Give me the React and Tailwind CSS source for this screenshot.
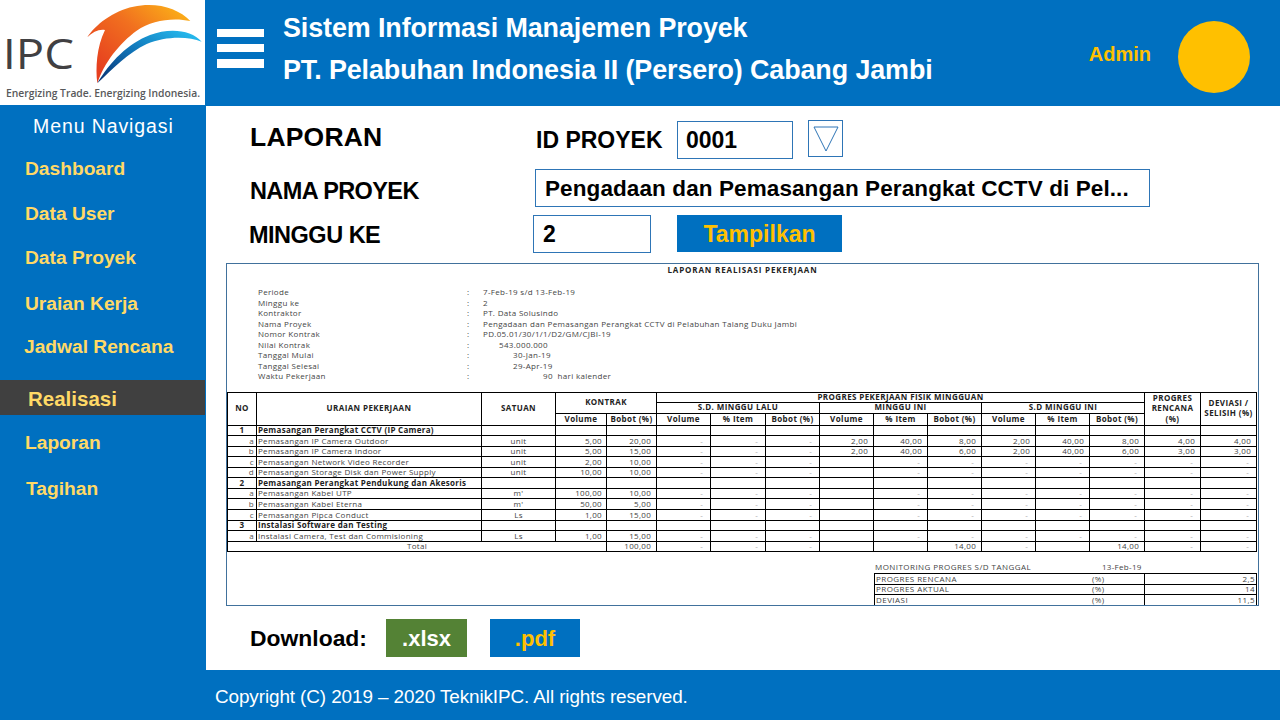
import React from "react";

const dash = "-";
const noWeek = [dash, dash, dash, "", dash, dash, dash, dash, dash, dash, dash];
const rowsData = [
  { h: "h-[10px]", no: "1", title: "Pemasangan Perangkat CCTV (IP Camera)", section: true },
  { h: "h-[11px]", no: "a", title: "Pemasangan IP Camera Outdoor", unit: "unit", vol: "5,00", bob: "20,00", cells: [dash, dash, dash, "2,00", "40,00", "8,00", "2,00", "40,00", "8,00", "4,00", "4,00"] },
  { h: "h-[10px]", no: "b", title: "Pemasangan IP Camera Indoor", unit: "unit", vol: "5,00", bob: "15,00", cells: [dash, dash, dash, "2,00", "40,00", "6,00", "2,00", "40,00", "6,00", "3,00", "3,00"] },
  { h: "h-[11px]", no: "c", title: "Pemasangan Network Video Recorder", unit: "unit", vol: "2,00", bob: "10,00", cells: noWeek },
  { h: "h-[10px]", no: "d", title: "Pemasangan Storage Disk dan Power Supply", unit: "unit", vol: "10,00", bob: "10,00", cells: noWeek },
  { h: "h-[11px]", no: "2", title: "Pemasangan Perangkat Pendukung dan Akesoris", section: true },
  { h: "h-[10px]", no: "a", title: "Pemasangan Kabel UTP", unit: "m'", vol: "100,00", bob: "10,00", cells: noWeek },
  { h: "h-[11px]", no: "b", title: "Pemasangan Kabel Eterna", unit: "m'", vol: "50,00", bob: "5,00", cells: noWeek },
  { h: "h-[11px]", no: "c", title: "Pemasangan Pipca Conduct", unit: "Ls", vol: "1,00", bob: "15,00", cells: noWeek },
  { h: "h-[10px]", no: "3", title: "Instalasi Software dan Testing", section: true },
  { h: "h-[11px]", no: "a", title: "Instalasi Camera, Test dan Commisioning", unit: "Ls", vol: "1,00", bob: "15,00", cells: noWeek },
];
const colWidths = [29, 225, 74, 51, 50, 54, 55, 54, 54, 54, 54, 54, 54, 55, 56, 56];
const info = [
  ["Periode", "7-Feb-19 s/d 13-Feb-19", "pl-0"],
  ["Minggu ke", "2", "pl-0"],
  ["Kontraktor", "PT. Data Solusindo", "pl-0"],
  ["Nama Proyek", "Pengadaan dan Pemasangan Perangkat CCTV di Pelabuhan Talang Duku Jambi", "pl-0"],
  ["Nomor Kontrak", "PD.05.01/30/1/1/D2/GM/CJBI-19", "pl-0"],
  ["Nilai Kontrak", "543.000.000", "pl-[16px]"],
  ["Tanggal Mulai", "30-Jan-19", "pl-[30px]"],
  ["Tanggal Selesai", "29-Apr-19", "pl-[30px]"],
  ["Waktu Pekerjaan", "90  hari kalender", "pl-[60px]"],
];
const menu = [
  ["Dashboard", "h-[44px] pl-[25px]"],
  ["Data User", "h-[45px] pl-[25px]"],
  ["Data Proyek", "h-[43px] pl-[25px]"],
  ["Uraian Kerja", "h-[49px] pl-[25px]"],
  ["Jadwal Rencana", "h-[37px] pl-[24px]"],
];
const b = "border border-black p-0 pb-[1px]";
const th = b + " text-center font-bold text-[#222] align-middle tracking-[0.4px]";

function Logo() {
  return (
    <svg viewBox="0 0 615 315" className="block w-[205px] h-[105px]">
      <defs>
        <linearGradient id="o" x1="0.1" y1="0.8" x2="1" y2="0">
          <stop offset="0" stopColor="#e63f1f" />
          <stop offset="0.5" stopColor="#f1701f" />
          <stop offset="1" stopColor="#fdbb17" />
        </linearGradient>
        <linearGradient id="c" x1="0" y1="1" x2="1" y2="0.1">
          <stop offset="0" stopColor="#0a2f6e" />
          <stop offset="0.5" stopColor="#0f74b8" />
          <stop offset="1" stopColor="#27bdf0" />
        </linearGradient>
      </defs>
      <path d="M262 112 C285 75 340 32 400 20 C470 5 535 25 571 63 C520 52 455 60 410 92 C360 128 310 190 292 250 C286 205 290 140 315 90 C298 86 278 96 262 112Z" fill="url(#o)" />
      <path d="M292 250 C330 185 385 130 450 105 C510 82 575 90 605 125 C565 108 495 108 440 132 C385 158 340 205 292 250Z" fill="url(#c)" />
      <text x="8" y="208" fontSize="126" fontWeight="500" fill="#414042" textLength="214" lengthAdjust="spacingAndGlyphs" style={{ fontFamily: '"Open Sans", sans-serif' }}>IPC</text>
      <text x="18" y="290" fontSize="34" fontWeight="600" fill="#58595b" textLength="582" lengthAdjust="spacingAndGlyphs" style={{ fontFamily: '"Open Sans", sans-serif' }}>Energizing Trade. Energizing Indonesia.</text>
    </svg>
  );
}

function Cell({ v }) {
  return (
    <td className={b + " text-right " + (v === dash ? "pr-[7px] text-[#aaa]" : "pr-[5px] text-[#444]")}>{v}</td>
  );
}

function ReportTable() {
  return (
    <table className="table-fixed border-collapse w-[1029px] text-[8px] leading-none tracking-[0.3px]">
      <colgroup>
        {colWidths.map((w, i) => <col key={i} style={{ width: w }} />)}
      </colgroup>
      <thead>
        <tr className="h-[10px]">
          <th rowSpan={3} className={th}>NO</th>
          <th rowSpan={3} className={th}>URAIAN PEKERJAAN</th>
          <th rowSpan={3} className={th}>SATUAN</th>
          <th rowSpan={2} colSpan={2} className={th}>KONTRAK</th>
          <th colSpan={9} className={th}>PROGRES PEKERJAAN FISIK MINGGUAN</th>
          <th rowSpan={3} className={th + " leading-[10.5px]"}>PROGRES<br />RENCANA<br />(%)</th>
          <th rowSpan={3} className={th + " leading-[10.5px]"}>DEVIASI /<br />SELISIH (%)</th>
        </tr>
        <tr className="h-[11px]">
          <th colSpan={3} className={th}>S.D. MINGGU LALU</th>
          <th colSpan={3} className={th}>MINGGU INI</th>
          <th colSpan={3} className={th}>S.D MINGGU INI</th>
        </tr>
        <tr className="h-[12px]">
          {["Volume", "Bobot (%)", "Volume", "% Item", "Bobot (%)", "Volume", "% Item", "Bobot (%)", "Volume", "% Item", "Bobot (%)"].map((t, i) => (
            <th key={i} className={th}>{t}</th>
          ))}
        </tr>
      </thead>
      <tbody>
        {rowsData.map((r, i) => (
          <tr key={i} className={r.h}>
            <td className={b + (r.section ? " text-center font-bold text-[#222]" : " text-right pr-[2px] text-[#555]")}>{r.no}</td>
            <td className={b + " pl-[1px] whitespace-nowrap " + (r.section ? "font-bold text-[#222]" : "text-[#444]")}>{r.title}</td>
            <td className={b + " text-center text-[#444]"}>{r.unit}</td>
            <td className={b + " text-right pr-[4px] text-[#444]"}>{r.vol}</td>
            <td className={b + " text-right pr-[5px] text-[#444]"}>{r.bob}</td>
            {(r.cells || Array(11).fill("")).map((v, j) => <Cell key={j} v={v} />)}
          </tr>
        ))}
        <tr className="h-[10px]">
          <td colSpan={4} className={b + " text-center text-[#444]"}>Total</td>
          <td className={b + " text-right pr-[5px] text-[#444]"}>100,00</td>
          {[dash, dash, dash, "", "", "14,00", dash, "", "14,00", dash, dash].map((v, j) => <Cell key={j} v={v} />)}
        </tr>
      </tbody>
    </table>
  );
}

function Monitoring() {
  const rows = [["PROGRES RENCANA", "2,5"], ["PROGRES AKTUAL", "14"], ["DEVIASI", "11,5"]];
  return (
    <div className="ml-[647px] mt-[10px] w-[383px] text-[8px] leading-none tracking-[0.45px] text-[#444]">
      <div className="flex h-[10px] items-center pl-[1px]">
        <span className="w-[227px]">MONITORING PROGRES S/D TANGGAL</span>
        <span className="tracking-[0.3px]">13-Feb-19</span>
      </div>
      <div className="grid grid-cols-[270px_1fr] border-t border-black mt-[1px]">
        {rows.map(([l, v], i) => (
          <div key={l} className={"col-span-2 grid grid-cols-[270px_1fr] h-[10.5px] border-x border-black " + (i < 2 ? "border-b" : "")}>
            <div className="flex items-center pl-[1px] border-r border-black">
              <span className="w-[216px]">{l}</span><span>(%)</span>
            </div>
            <div className="flex items-center justify-end pr-[1px]">{v}</div>
          </div>
        ))}
      </div>
    </div>
  );
}

export default function App() {
  return (
    <div className="w-[1280px] h-[720px] flex flex-col overflow-hidden bg-white font-['Liberation_Sans',sans-serif]">
      <header className="h-[106px] flex bg-[#0070c0] shrink-0">
        <div className="w-[205px] h-[105px] bg-white shrink-0"><Logo /></div>
        <div className="w-[47px] ml-[12px] mt-[29px] flex flex-col gap-[7px] shrink-0">
          <div className="h-[8px] bg-white" />
          <div className="h-[8px] bg-white" />
          <div className="h-[9px] bg-white" />
        </div>
        <div className="ml-[19px] mt-[7px] font-bold text-white text-[26.9px] leading-[42px] tracking-[-0.1px] whitespace-nowrap">
          <div>Sistem Informasi Manajemen Proyek</div>
          <div>PT. Pelabuhan Indonesia II (Persero) Cabang Jambi</div>
        </div>
        <div className="ml-auto mr-[30px] flex items-start">
          <span className="mt-[43px] text-[20px] leading-[22px] font-bold text-[#ffc000] mr-[27px]">Admin</span>
          <div className="mt-[21px] w-[72px] h-[72px] rounded-full bg-[#ffc000]" />
        </div>
      </header>
      <div className="flex flex-1 min-h-0">
        <nav className="w-[206px] bg-[#0070c0] shrink-0 text-[19.2px] font-bold text-[#ffd966] leading-none flex flex-col pt-[8px]">
          <div className="h-[26px] flex items-center pl-[33px] text-[#fff] font-normal text-[19.5px] tracking-[0.9px]">Menu Navigasi</div>
          <div className="h-[7px]" />
          {menu.map(([t, c]) => <div key={t} className={"flex items-center shrink-0 " + c}>{t}</div>)}
          <div className="h-[15px] shrink-0" />
          <div className="h-[35px] flex items-center pl-[28px] pt-[3px] bg-[#404040] w-[205px] text-[20.5px] shrink-0">Realisasi</div>
          <div className="h-[10px] shrink-0" />
          <div className="h-[36px] flex items-center pl-[25px] shrink-0">Laporan</div>
          <div className="h-[10px] shrink-0" />
          <div className="h-[36px] flex items-center pl-[26px] shrink-0">Tagihan</div>
        </nav>
        <main className="flex-1 flex flex-col pl-[20px] text-black">
          <div className="pl-[24px] flex flex-col font-bold">
            <div className="flex mt-[14px] h-[39px] items-center">
              <div className="w-[286px] text-[26.5px] tracking-[0.2px] -mt-[4px]">LAPORAN</div>
              <div className="w-[141px] text-[23px] whitespace-nowrap pt-[2px]">ID PROYEK</div>
              <div className="w-[116px] h-[38px] border border-[#2e75b6] flex items-center pl-[8px] pt-[2px] text-[23px]">0001</div>
              <div className="ml-[15px] w-[35px] h-[37px] border border-[#2e75b6] flex items-center justify-center -mt-[2px]">
                <svg width="26" height="28" viewBox="0 0 26 28">
                  <path d="M1 2H25L13 26Z" fill="#fff" stroke="#2e75b6" strokeWidth="1" />
                </svg>
              </div>
            </div>
            <div className="flex mt-[10px] h-[38px] items-center">
              <div className="w-[285px] text-[23.5px] tracking-[-0.6px] mt-[8px]">NAMA PROYEK</div>
              <div className="w-[615px] h-[38px] border border-[#2e75b6] flex items-center pl-[9px] pt-[2px] text-[22.5px] tracking-[0.1px] whitespace-nowrap">Pengadaan dan Pemasangan Perangkat CCTV di Pel...</div>
            </div>
            <div className="flex mt-[8px] h-[38px] items-center">
              <div className="w-[283px] text-[23.5px] tracking-[-0.5px] mt-[4px] -ml-[1px]">MINGGU KE</div>
              <div className="ml-[1px] w-[118px] h-[38px] border border-[#2e75b6] flex items-center pl-[9px] text-[23px]">2</div>
              <div className="ml-[26px] -mt-[1px] w-[165px] h-[37px] pt-[1px] bg-[#0070c0] text-[#ffc000] flex items-center justify-center text-[23px]">Tampilkan</div>
            </div>
          </div>
          <section className="mt-[10px] w-[1033px] h-[343px] border border-[#41719c] overflow-hidden font-['Open_Sans',sans-serif]">
            <div className="h-[9px] flex items-center justify-center text-[8px] tracking-[0.85px] font-bold text-[#222] translate-y-[1px]">LAPORAN REALISASI PEKERJAAN</div>
            <div className="mt-[14px] text-[8px] leading-none tracking-[0.32px] text-[#444]">
              {info.map(([k, v, c]) => (
                <div key={k} className="flex h-[10.5px] items-center">
                  <span className="w-[209px] ml-[31px] shrink-0">{k}</span>
                  <span className="w-[16px] shrink-0">:</span>
                  <span className={"whitespace-pre " + c}>{v}</span>
                </div>
              ))}
            </div>
            <div className="mt-[10px]"><ReportTable /></div>
            <Monitoring />
          </section>
          <div className="pl-[24px] mt-[13px] h-[38px] flex items-center font-bold">
            <div className="w-[136px] text-[22.9px] pt-[1px]">Download:</div>
            <div className="w-[81px] h-[38px] bg-[#548235] text-white flex items-center justify-center text-[22px]">.xlsx</div>
            <div className="ml-[23px] w-[90px] h-[38px] bg-[#0070c0] text-[#ffc000] flex items-center justify-center text-[22px]">.pdf</div>
          </div>
        </main>
      </div>
      <footer className="h-[50px] bg-[#0070c0] shrink-0 flex items-center pl-[215px] pt-[4px] text-[18.9px] tracking-[-0.1px] text-white">
        Copyright (C) 2019 – 2020 TeknikIPC. All rights reserved.
      </footer>
    </div>
  );
}
